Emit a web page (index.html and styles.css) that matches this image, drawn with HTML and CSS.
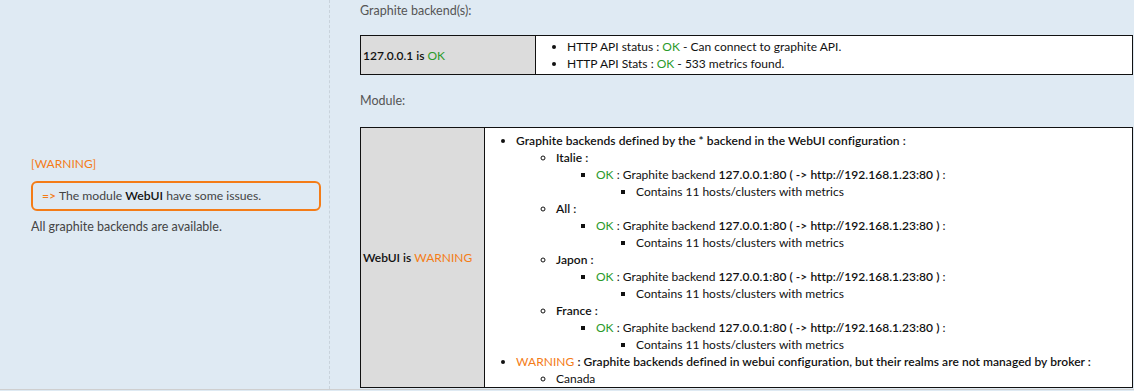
FILE: index.html
```
<!DOCTYPE html>
<html lang="en">
<head>
	<meta charset="UTF-8">
	<title>Graphite status</title>
	<link rel="stylesheet" href="styles.css">
</head>
<body>
	<div class="page">
		<div class="summary">
			<div class="summary-state warning">[WARNING]</div>
			<div class="summary-box"><span class="arrow warning">=&gt;</span> The module <b>WebUI</b> have some issues.</div>
			<div class="summary-text">All graphite backends are available.</div>
		</div>

		<div class="details">
			<p class="section-title">Graphite backend(s):</p>
			<table class="backend">
				<tr>
					<td class="name">127.0.0.1 is <span class="ok">OK</span></td>
					<td class="info">
						<ul>
							<li>HTTP API status : <span class="ok">OK</span> - Can connect to graphite API.</li>
							<li>HTTP API Stats : <span class="ok">OK</span> - 533 metrics found.</li>
						</ul>
					</td>
				</tr>
			</table>

			<p class="section-title">Module:</p>
			<table class="module">
				<tr>
					<td class="name">WebUI is <span class="warning">WARNING</span></td>
					<td class="info">
						<ul>
							<li><b>Graphite backends defined by the * backend in the WebUI configuration :</b>
								<ul>
									<li><b>Italie :</b>
										<ul>
											<li><span class="ok">OK</span> : Graphite backend <b>127.0.0.1:80 ( -&gt; http://192.168.1.23:80 )</b> :
												<ul><li>Contains 11 hosts/clusters with metrics</li></ul>
											</li>
										</ul>
									</li>
									<li><b>All :</b>
										<ul>
											<li><span class="ok">OK</span> : Graphite backend <b>127.0.0.1:80 ( -&gt; http://192.168.1.23:80 )</b> :
												<ul><li>Contains 11 hosts/clusters with metrics</li></ul>
											</li>
										</ul>
									</li>
									<li><b>Japon :</b>
										<ul>
											<li><span class="ok">OK</span> : Graphite backend <b>127.0.0.1:80 ( -&gt; http://192.168.1.23:80 )</b> :
												<ul><li>Contains 11 hosts/clusters with metrics</li></ul>
											</li>
										</ul>
									</li>
									<li><b>France :</b>
										<ul>
											<li><span class="ok">OK</span> : Graphite backend <b>127.0.0.1:80 ( -&gt; http://192.168.1.23:80 )</b> :
												<ul><li>Contains 11 hosts/clusters with metrics</li></ul>
											</li>
										</ul>
									</li>
								</ul>
							</li>
							<li><b><span class="warning">WARNING</span> : Graphite backends defined in webui configuration, but their realms are not managed by broker :</b>
								<ul>
									<li>Canada</li>
								</ul>
							</li>
						</ul>
					</td>
				</tr>
			</table>
		</div>
	</div>
</body>
</html>
```

FILE: styles.css
```
*{
	box-sizing: border-box;
}
body{
	margin: 0;
	background: #dfeaf3;
	font-family: Lato, "Liberation Sans", sans-serif;
	font-size: 12.5px;
	line-height: 17px;
	color: #555;
}
b{
	font-weight: 600;
}
.page{
	display: flex;
	height: 390px;
	border-bottom: 1px solid #cfcfcf;
	overflow: hidden;
}
.summary{
	width: 330px;
	flex: none;
	border-right: 1px dashed #c9d3dc;
	padding: 0 8px 0 31px;
	display: flex;
	flex-direction: column;
	justify-content: center;
}
.summary-state{
	font-size: 12px;
}
.summary-box{
	margin: 9px 0 7px;
	padding: 4px 9px 5px;
	border: 2px solid #f47c17;
	border-radius: 6px;
	color: #444;
	font-size: 12.2px;
}
.summary-box b{
	color: #111;
}
.arrow{
	font-weight: 600;
}
.summary-text{
	color: #444;
}
.warning{
	color: #f47c17;
}
.ok{
	color: #2b9a2b;
}
.details{
	flex: 1;
	padding: 2px 1px 0 30px;
}
.section-title{
	margin: 0 0 16px;
}
.backend + .section-title{
	margin-top: 17px;
	margin-bottom: 18px;
}
table{
	width: 100%;
	border-collapse: collapse;
	background: #fff;
	color: #111;
	font-size: 12px;
}
td{
	border: 1px solid #111;
	padding: 0;
	vertical-align: middle;
}
td.name{
	background: #dcdcdc;
	padding-left: 2px;
	font-weight: 600;
}
td.name span{
	font-weight: normal;
}
.backend td.name{
	width: 175px;
}
.module td.name{
	width: 124px;
}
.backend td.info{
	padding: 2px 0 2px;
}
.module td.info{
	padding: 4px 0 0;
}
ul{
	margin: 0;
	padding-left: 40px;
}
td.info > ul{
	padding-left: 31px;
}
li b{
	letter-spacing: 0.05px;
}
li b span{
	font-weight: normal;
}
```
